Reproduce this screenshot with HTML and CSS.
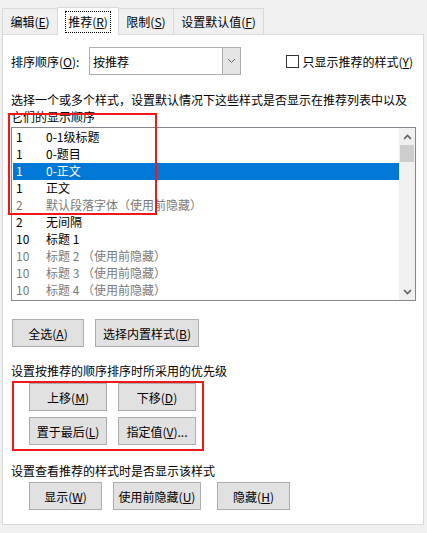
FILE: index.html
```html
<!DOCTYPE html>
<html lang="zh">
<head>
<meta charset="utf-8">
<link rel="stylesheet" href="styles.css">
</head>
<body>
<div class="tabs">
  <div class="tab w55">编辑(<u>E</u>)</div>
  <div class="tab tab-active w61"><span class="focus">推荐(<u>R</u>)</span></div>
  <div class="tab w55">限制(<u>S</u>)</div>
  <div class="tab w90">设置默认值(<u>F</u>)</div>
</div>
<div class="panel">
  <div class="row-top">
    <span class="lbl">排序顺序(<u>O</u>):</span>
    <div class="combo">
      <span class="combo-text">按推荐</span>
      <span class="combo-btn"><svg width="9" height="6" viewBox="0 0 9 6"><path d="M1 1 L4.5 4.5 L8 1" fill="none" stroke="#606060" stroke-width="1"/></svg></span>
    </div>
    <span class="spacer"></span>
    <label class="chk"><span class="box"></span>只显示推荐的样式(<u>Y</u>)</label>
  </div>
  <p class="desc">选择一个或多个样式，设置默认情况下这些样式是否显示在推荐列表中以及<br>它们的显示顺序</p>
  <div class="listbox">
    <div class="rows">
      <div class="item"><span class="num">1</span><span>0-1级标题</span></div>
      <div class="item"><span class="num">1</span><span>0-题目</span></div>
      <div class="item sel"><span class="num">1</span><span>0-正文</span></div>
      <div class="item"><span class="num">1</span><span>正文</span></div>
      <div class="item dim"><span class="num">2</span><span>默认段落字体（使用前隐藏）</span></div>
      <div class="item"><span class="num">2</span><span>无间隔</span></div>
      <div class="item"><span class="num">10</span><span>标题 1</span></div>
      <div class="item dim"><span class="num">10</span><span>标题 2 （使用前隐藏）</span></div>
      <div class="item dim"><span class="num">10</span><span>标题 3 （使用前隐藏）</span></div>
      <div class="item dim"><span class="num">10</span><span>标题 4 （使用前隐藏）</span></div>
    </div>
    <div class="scroll">
      <span class="arrow"><svg width="9" height="6" viewBox="0 0 9 6"><path d="M1 5 L4.5 1.5 L8 5" fill="none" stroke="#606060" stroke-width="1.6"/></svg></span>
      <span class="thumb"></span>
      <span class="track"></span>
      <span class="arrow"><svg width="9" height="6" viewBox="0 0 9 6"><path d="M1 1 L4.5 4.5 L8 1" fill="none" stroke="#606060" stroke-width="1.6"/></svg></span>
    </div>
  </div>
  <div class="btnrow first">
    <button class="btn w72">全选(<u>A</u>)</button>
    <button class="btn w104">选择内置样式(<u>B</u>)</button>
  </div>
  <p class="label">设置按推荐的顺序排序时所采用的优先级</p>
  <div class="redgroup">
    <div class="btngrid">
      <button class="btn w78">上移(<u>M</u>)</button>
      <button class="btn w78">下移(<u>D</u>)</button>
      <button class="btn w78">置于最后(<u>L</u>)</button>
      <button class="btn w78">指定值(<u>V</u>)...</button>
    </div>
  </div>
  <p class="label lbl2">设置查看推荐的样式时是否显示该样式</p>
  <div class="btnrow last">
    <button class="btn w73">显示(<u>W</u>)</button>
    <button class="btn w88">使用前隐藏(<u>U</u>)</button>
    <button class="btn w73 gap16">隐藏(<u>H</u>)</button>
  </div>
</div>
<div class="redbox"></div>
</body>
</html>
```

FILE: styles.css
```css
html, body {
  margin: 0;
  padding: 0;
  background: #f0f0f0;
  font-family: "Noto Sans CJK SC", "Noto Sans", sans-serif;
  font-size: 12px;
  color: #000;
}
u { text-decoration: underline; text-underline-offset: 1px; }

.tabs {
  display: flex;
  align-items: flex-end;
  height: 34px;
  padding-left: 2px;
  box-sizing: border-box;
}
.tab {
  height: 26px;
  box-sizing: border-box;
  border: 1px solid #d9d9d9;
  border-bottom: none;
  background: #f0f0f0;
  display: flex;
  align-items: center;
  justify-content: center;
  line-height: 16px;
  margin-left: -1px;
  padding-top: 1px;
}
.tab:first-child { margin-left: 0; }
.tab-active {
  height: 28px;
  background: #fff;
  position: relative;
  z-index: 1;
  margin-bottom: -1px;
  padding-top: 0;
}
.focus {
  border: 1px dotted #000;
  padding: 2px 2px;
  line-height: 16px;
}
.w55 { width: 56px; }
.w61 { width: 62px; }
.w90 { width: 91px; }

.panel {
  margin-left: 2px;
  width: 422px;
  height: 491px;
  box-sizing: border-box;
  border: 1px solid #d9d9d9;
  background: #fff;
  padding: 12px 8px 0 8px;
}
.row-top {
  display: flex;
  align-items: center;
  height: 28px;
}
.lbl { width: 78px; }
.combo {
  width: 152px;
  height: 28px;
  box-sizing: border-box;
  border: 1px solid #adadad;
  display: flex;
  align-items: stretch;
  background: #fff;
}
.combo-text {
  flex: 1;
  padding-left: 3px;
  display: flex;
  align-items: center;
}
.combo-btn {
  width: 17px;
  background: #e5e5e5;
  border-left: 1px solid #adadad;
  display: flex;
  align-items: center;
  justify-content: center;
}
.spacer { flex: 1; }
.chk {
  display: flex;
  align-items: center;
  margin-right: 2px;
}
.box {
  width: 13px;
  height: 13px;
  box-sizing: border-box;
  border: 1px solid #333;
  background: #fff;
  margin-right: 4px;
}

.desc {
  margin: 16px 0 0 0;
  line-height: 17px;
}
.listbox {
  margin-top: 2px;
  width: 405px;
  height: 174px;
  box-sizing: border-box;
  border: 1px solid #828790;
  display: flex;
  padding: 1px 0 1px 1px;
}
.rows {
  flex: 1;
}
.item {
  height: 17px;
  line-height: 16px;
  display: flex;
  padding-left: 3px;
}
.num { width: 30px; }
.item.sel { background: #0078d7; color: #fff; }
.item.dim { color: #7a7a7a; }
.scroll {
  width: 16px;
  background: #f0f0f0;
  display: flex;
  flex-direction: column;
  margin-top: -1px;
  margin-bottom: -1px;
}
.arrow {
  height: 17px;
  display: flex;
  align-items: center;
  justify-content: center;
}
.thumb {
  height: 17px;
  background: #cdcdcd;
  margin: 0 1px;
}
.track { flex: 1; }

.btnrow {
  display: flex;
  padding-left: 1px;
}
.btnrow.first { margin-top: 18px; gap: 11px; }
.btn {
  height: 28px;
  box-sizing: border-box;
  border: 1px solid #adadad;
  background: #e1e1e1;
  font-family: inherit;
  font-size: 12px;
  color: #000;
  padding: 0;
  margin: 0;
}
.w72 { width: 72px; }
.w104 { width: 104px; }
.w78 { width: 78px; }
.w73 { width: 73px; }
.w88 { width: 88px; }

.label {
  margin: 15px 0 0 0;
  line-height: 17px;
}
.redgroup {
  margin-top: 2px;
  margin-left: 1px;
  width: 192px;
  height: 70px;
  box-sizing: border-box;
  border: 2px solid #f01818;
  padding: 0 0 0 15px;
}
.btngrid {
  display: grid;
  grid-template-columns: 78px 78px;
  column-gap: 11px;
  row-gap: 6px;
}
.lbl2 { margin-top: 11px; }
.btnrow.last { margin-top: 3px; padding-left: 18px; gap: 11px; }
.gap16 { margin-left: 5px; }

.redbox {
  position: absolute;
  left: 8px;
  top: 113px;
  width: 149px;
  height: 102px;
  box-sizing: border-box;
  border: 2px solid #f01818;
}
```
